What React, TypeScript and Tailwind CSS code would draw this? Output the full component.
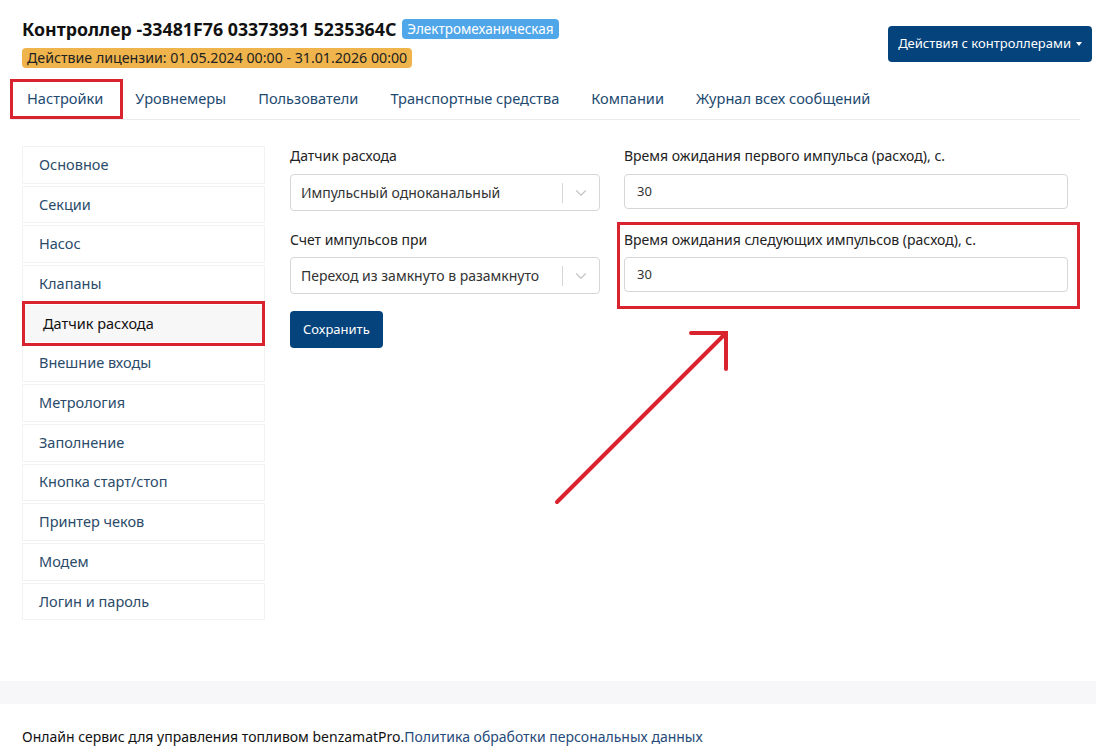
import { ChevronDown } from "lucide-react"

const tabs = ["Настройки", "Уровнемеры", "Пользователи", "Транспортные средства", "Компании", "Журнал всех сообщений"]

const menu = [
  "Основное",
  "Секции",
  "Насос",
  "Клапаны",
  "Датчик расхода",
  "Внешние входы",
  "Метрология",
  "Заполнение",
  "Кнопка старт/стоп",
  "Принтер чеков",
  "Модем",
  "Логин и пароль",
]

function Select({ value }: { value: string }) {
  return (
    <div className="flex h-[37px] items-center rounded border border-[#d6d6d6] bg-white pl-[10px] text-[14px] text-[#333]">
      <span className="flex-1 truncate">{value}</span>
      <span className="h-[20px] w-px bg-[#d6d6d6]" />
      <span className="flex w-[36px] justify-center text-[#c4c4c4]">
        <ChevronDown className="h-[18px] w-[18px]" strokeWidth={1.5} />
      </span>
    </div>
  )
}

export default function App() {
  return (
    <div className="relative min-h-[753px] bg-white font-['Noto_Sans',sans-serif] text-[#212529]">
      <div className="px-[22px] pt-[18px]">
        {/* Header */}
        <div className="flex items-start justify-between">
          <div>
            <div className="flex items-center gap-[6px]">
              <h1 className="text-[17.8px] font-bold leading-[22px] text-[#111]">Контроллер -33481F76 03373931 5235364C</h1>
              <span className="rounded-[4px] bg-[#4fa6e8] px-[5px] py-[1px] text-[13.5px] leading-[18px] text-white">
                Электромеханическая
              </span>
            </div>
            <div className="mt-[8px] inline-block rounded-[4px] bg-[#f0b44c] px-[5px] py-[1px] text-[14.2px] leading-[18px] text-[#222]">
              Действие лицензии: 01.05.2024 00:00 - 31.01.2026 00:00
            </div>
          </div>
          <button className="mt-[8px] mr-[-18px] flex h-[36px] items-center gap-[4px] rounded-[4px] bg-[#05437c] px-[10px] text-[13px] text-white">
            Действия с контроллерами
            <span className="ml-[1px] inline-block border-x-[3.5px] border-t-[4px] border-x-transparent border-t-white" />
          </button>
        </div>

        {/* Tabs */}
        <div className="mt-[10px] mr-[-6px] ml-[-11px] flex border-b border-[#e9ecef] text-[14.6px] text-[#1e4a70]">
          {tabs.map((t, i) => (
            <div key={t} className="relative flex h-[40px] items-center px-[16px]">
              {t}
              {i === 0 && (
                <span className="absolute -left-[1px] -right-[4px] top-0 bottom-0 border-[3px] border-[#d9232e]" />
              )}
            </div>
          ))}
        </div>

        {/* Body */}
        <div className="mt-[26px] flex gap-[25px]">
          <div className="flex w-[243px] flex-col gap-[2px]">
            {menu.map((m) =>
              m === "Датчик расхода" ? (
                <div
                  key={m}
                  className="relative flex h-[37.7px] items-center bg-[#f8f7f7] pl-[21px] text-[14.5px] text-[#111]"
                >
                  {m}
                  <span className="absolute inset-x-0 -top-[4px] -bottom-[4px] border-[3px] border-[#d9232e]" />
                </div>
              ) : (
                <div
                  key={m}
                  className="flex h-[37.7px] items-center border border-[#f2f2f2] pl-[16px] text-[14.5px] text-[#2a4b6a]"
                >
                  {m}
                </div>
              )
            )}
          </div>

          <div className="flex flex-1 gap-[24px]">
            <div className="w-[310px]">
              <label className="block text-[14px] leading-[20px] text-[#222]">Датчик расхода</label>
              <div className="mt-[8px]">
                <Select value="Импульсный одноканальный" />
              </div>
              <label className="mt-[19px] block text-[14px] leading-[20px] text-[#222]">Счет импульсов при</label>
              <div className="mt-[7px]">
                <Select value="Переход из замкнуто в разамкнуто" />
              </div>
              <button className="mt-[17px] h-[37px] rounded-[4px] bg-[#05437c] px-[13px] text-[13px] text-white">
                Сохранить
              </button>
            </div>

            <div className="flex-1">
              <div className="pr-[6px]">
                <label className="block text-[14px] leading-[20px] text-[#222]">
                  Время ожидания первого импульса (расход), с.
                </label>
                <div className="mt-[8px] flex h-[35px] items-center rounded border border-[#d6d6d6] px-[12px] text-[13px] text-[#333]">
                  30
                </div>
              </div>
              <div className="mt-[13px] ml-[-7px] mr-[-6px] border-[3px] border-[#d9232e] pl-[4px] pr-[9px] pt-[5px] pb-[14px]">
                <label className="block text-[14px] leading-[20px] text-[#222]">
                  Время ожидания следующих импульсов (расход), с.
                </label>
                <div className="mt-[7px] flex h-[35px] items-center rounded border border-[#d6d6d6] px-[12px] text-[13px] text-[#333]">
                  30
                </div>
              </div>
            </div>
          </div>
        </div>
      </div>

      {/* annotation arrow */}
      <svg className="pointer-events-none absolute left-0 top-0" width="1096" height="753">
        <g stroke="#d9232e" strokeWidth="4" strokeLinecap="round" fill="none">
          <line x1="557" y1="502" x2="724" y2="335" />
          <polyline points="691,333 726,333 726,369" />
        </g>
      </svg>

      {/* Footer */}
      <div className="mt-[61px] h-[23px] bg-[#f7f7fa]" />
      <div className="px-[22px] pt-[22px] text-[14px] text-[#111]">
        Онлайн сервис для управления топливом benzamatPro.
        <a className="text-[#1f4a7a]">Политика обработки персональных данных</a>
      </div>
    </div>
  )
}
